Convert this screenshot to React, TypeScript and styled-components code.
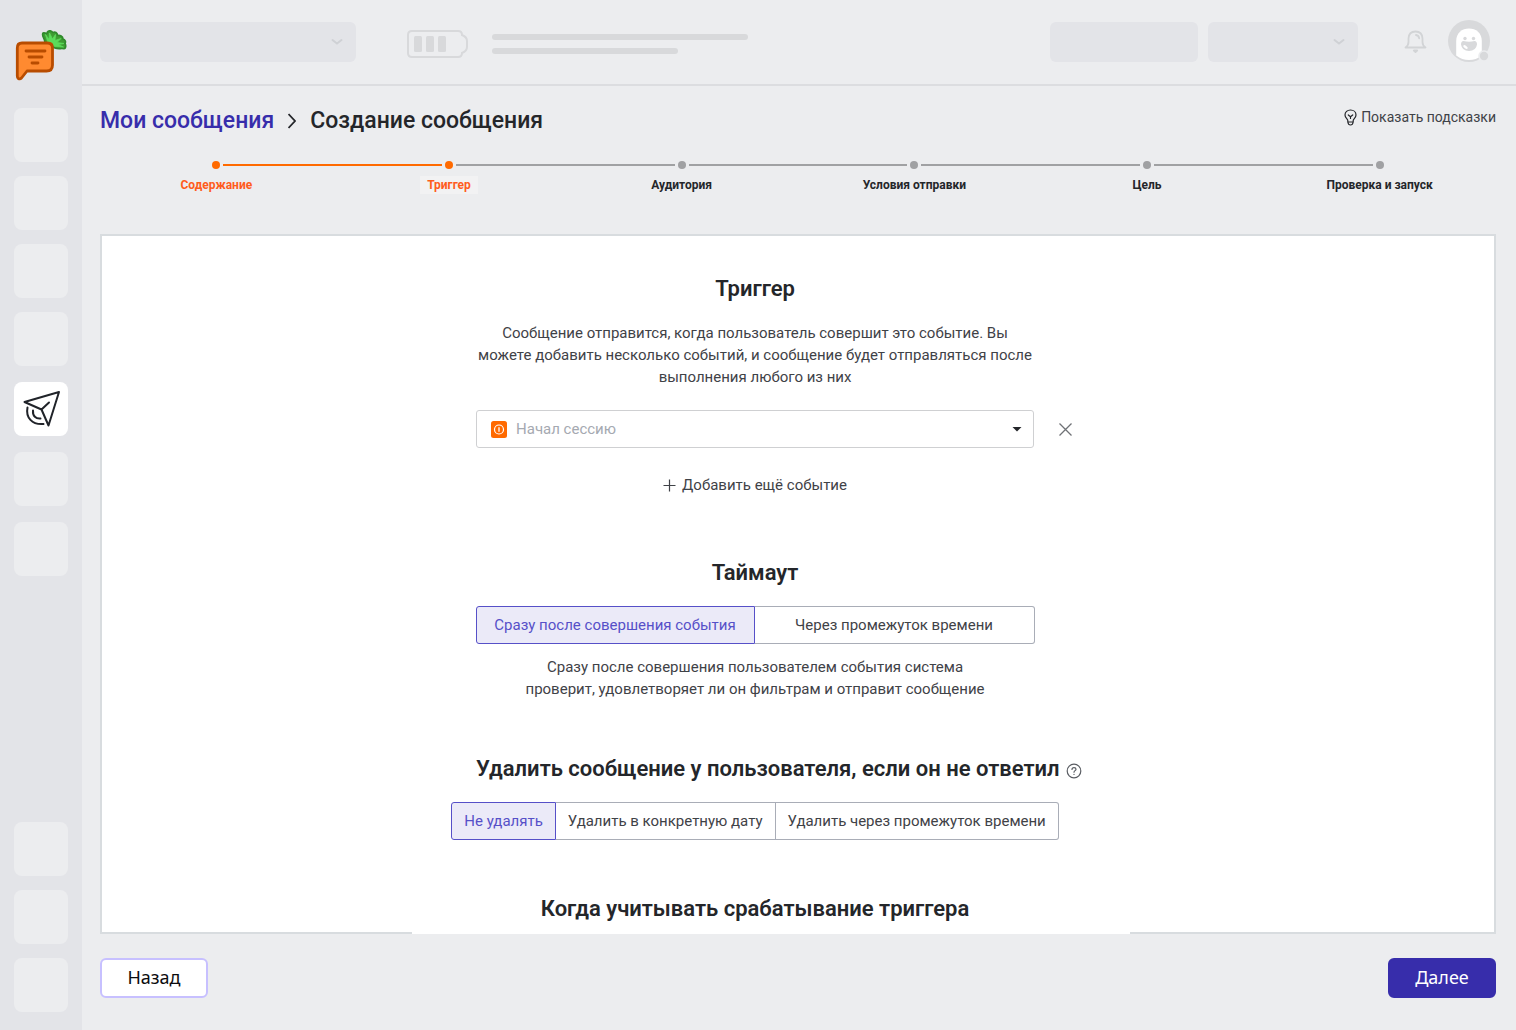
import React, { useState } from "react";
import styled, { createGlobalStyle, css } from "styled-components";

const color = {
  page: "#ecedef",
  rail: "#e3e4e8",
  line: "#dcdde0",
  ghost: "#d8d9db",
  panelBorder: "#d8dcdf",
  ink: "#24262a",
  text: "#3f4247",
  muted: "#a5a9b1",
  accent: "#372dab",
  selected: "#5650c8",
  orange: "#ff6a00",
  orangeText: "#ff5c1c",
  step: "#a0a1a3",
};

const uiFont = `Roboto, "Noto Sans", sans-serif`;

const GlobalStyle = createGlobalStyle`
  *, *::before, *::after { box-sizing: border-box; }
  body { margin: 0; background: ${color.page}; font-family: ${uiFont}; color: ${color.ink}; }
  button, select, input { font: inherit; color: inherit; }
  button { cursor: pointer; }
`;

const Page = styled.div`
  display: flex;
  min-height: 100vh;
`;

const Rail = styled.nav`
  flex: none;
  width: 82px;
  display: flex;
  flex-direction: column;
  justify-content: space-between;
  gap: 32px;
  padding: 30px 14px 18px;
  background: ${color.rail};
`;

const RailGroup = styled.div<{ $gap?: number }>`
  display: flex;
  flex-direction: column;
  gap: ${(p) => p.$gap ?? 14}px;
`;

const LogoLink = styled.a`
  display: flex;
  justify-content: center;
  margin-bottom: 12px;
`;

const Tile = styled.button<{ $active?: boolean }>`
  display: flex;
  align-items: center;
  justify-content: center;
  width: 54px;
  height: 54px;
  padding: 0;
  border: 0;
  border-radius: 8px;
  background: ${(p) => (p.$active ? "#fff" : color.page)};
`;

const Body = styled.div`
  flex: 1;
  min-width: 0;
  display: flex;
  flex-direction: column;
`;

const Header = styled.header`
  display: flex;
  align-items: center;
  height: 86px;
  padding: 0 26px 0 18px;
  border-bottom: 2px solid ${color.line};
`;

const GhostButton = styled.button<{ $width: number }>`
  display: flex;
  align-items: center;
  justify-content: flex-end;
  width: ${(p) => p.$width}px;
  height: 40px;
  padding: 0 13px;
  border: 0;
  border-radius: 6px;
  background: ${color.rail};
`;

const Usage = styled.div`
  display: flex;
  align-items: center;
  gap: 24px;
  flex: 1;
  padding: 4px 0 0 51px;
`;

const UsageLines = styled.div`
  display: flex;
  flex-direction: column;
  gap: 8px;
`;

const UsageLine = styled.div<{ $width: number }>`
  width: ${(p) => p.$width}px;
  height: 6px;
  border-radius: 3px;
  background: ${color.ghost};
`;

const HeaderActions = styled.div`
  display: flex;
  align-items: center;
  gap: 10px;
`;

const IconButton = styled.button`
  display: flex;
  padding: 0;
  border: 0;
  background: none;
`;

const Profile = styled.div`
  display: flex;
  align-items: center;
  gap: 21px;
  margin-left: 36px;
  padding-bottom: 2px;
`;

const Main = styled.main`
  flex: 1;
  display: flex;
  flex-direction: column;
  padding: 16px 20px 32px 18px;
`;

const TitleBar = styled.div`
  display: flex;
  align-items: flex-start;
  justify-content: space-between;
`;

const Crumbs = styled.nav`
  display: flex;
  align-items: center;
  gap: 14px;
  font-size: 23px;
  line-height: 37px;
  font-weight: 500;

  a { color: ${color.accent}; text-decoration: none; }
  h1 { margin: 0; font: inherit; }
`;

const Hints = styled.button`
  display: flex;
  align-items: center;
  gap: 4px;
  padding: 4px 0;
  border: 0;
  background: none;
  color: ${color.text};
  font-size: 14px;
  line-height: 22px;
`;

const Steps = styled.ol`
  display: grid;
  grid-template-columns: repeat(6, 1fr);
  margin: 18px 0 40px;
  padding: 0;
  list-style: none;
`;

const Step = styled.li`
  display: flex;
  flex-direction: column;
  align-items: center;
  gap: 3px;
`;

const Track = styled.div`
  align-self: stretch;
  display: grid;
  grid-template-columns: 1fr 14px 1fr;
  align-items: center;
  height: 16px;
`;

const Segment = styled.span<{ $tone?: string }>`
  height: 2px;
  background: ${(p) => p.$tone ?? "transparent"};
`;

const Dot = styled.span<{ $tone: string }>`
  justify-self: center;
  width: 8px;
  height: 8px;
  border-radius: 50%;
  background: ${(p) => p.$tone};
`;

const StepLabel = styled.span<{ $state: "done" | "active" | "next" }>`
  padding: 1px 7px;
  font-size: 12px;
  line-height: 16px;
  font-weight: 700;
  color: ${(p) => (p.$state === "next" ? color.ink : color.orangeText)};
  background: ${(p) => (p.$state === "active" ? "#f2f2f3" : "transparent")};
`;

const Panel = styled.section`
  flex: 1;
  display: grid;
  grid-template-columns: 23fr 718px 27fr;
  background: #fff;
  border: 2px solid ${color.panelBorder};
`;

const Form = styled.form`
  grid-column: 2;
  display: flex;
  flex-direction: column;
  align-items: center;
  gap: 55px;
  margin-bottom: -2px;
  padding: 39px 32px 11px 0;
  background: #fff;
`;

const Block = styled.section`
  display: flex;
  flex-direction: column;
  align-items: center;
  width: 558px;
`;

const Heading = styled.h2`
  margin: 0 0 19px;
  font-size: 22px;
  line-height: 28px;
  font-weight: 600;
  white-space: nowrap;

  &:last-child { margin-bottom: 0; }
`;

const HeadingWithHelp = styled(Heading)`
  display: flex;
  align-items: center;
  gap: 6px;
  align-self: flex-start;
`;

const Help = styled.button`
  display: flex;
  padding: 4px 0 0;
  border: 0;
  background: none;
`;

const Note = styled.p`
  margin: 0;
  font-size: 15px;
  line-height: 22px;
  color: ${color.text};
  text-align: center;
  white-space: nowrap;
`;

const EventRow = styled.div`
  position: relative;
  width: 558px;
  margin: 22px 0 26px;
`;

const EventSelect = styled.select`
  display: block;
  width: 100%;
  height: 38px;
  padding: 0 39px;
  appearance: none;
  border: 1px solid #cfd0d2;
  border-radius: 3px;
  background: #fff;
  color: ${color.muted};
  font-size: 15px;
`;

const Adornment = styled.span<{ $side: "left" | "right" }>`
  position: absolute;
  top: 0;
  bottom: 0;
  ${(p) => (p.$side === "left" ? "left: 15px;" : "right: 12px;")}
  display: flex;
  align-items: center;
  pointer-events: none;
`;

const RemoveButton = styled.button`
  position: absolute;
  left: calc(100% + 24px);
  top: 12px;
  display: flex;
  padding: 0;
  border: 0;
  background: none;
`;

const AddButton = styled.button`
  display: flex;
  align-items: center;
  gap: 6px;
  margin-bottom: 8px;
  padding: 0;
  border: 0;
  background: none;
  color: ${color.text};
  font-size: 15px;
  line-height: 22px;
`;

const Segmented = styled.fieldset<{ $even?: boolean }>`
  display: ${(p) => (p.$even ? "grid" : "flex")};
  grid-template-columns: 279px 280px;
  min-width: 0;
  margin: 0;
  padding: 0;
  border: 0;
  & + p { margin-top: 12px; }
`;

const Option = styled.label<{ $on: boolean }>`
  position: relative;
  display: flex;
  align-items: center;
  justify-content: center;
  height: 38px;
  padding: 0 12px;
  border: 1px solid #a9adb7;
  border-left-width: 0;
  background: #fff;
  color: ${color.text};
  font-size: 15px;
  white-space: nowrap;
  cursor: pointer;

  &:first-of-type { border-left-width: 1px; border-radius: 3px 0 0 3px; }
  &:last-of-type { border-radius: 0 3px 3px 0; }

  ${(p) =>
    p.$on &&
    css`
      border-color: ${color.selected};
      background: #ebeaf8;
      color: ${color.selected};
    `}

  input {
    position: absolute;
    inset: 0;
    margin: 0;
    opacity: 0;
    cursor: pointer;
  }
`;

const Footer = styled.footer`
  display: flex;
  justify-content: space-between;
  margin-top: 24px;
`;

const NavButton = styled.button<{ $primary?: boolean }>`
  width: 108px;
  height: 40px;
  padding: 0 0 2px;
  border: 2px solid ${(p) => (p.$primary ? color.accent : "#c7c0ff")};
  border-radius: 6px;
  background: ${(p) => (p.$primary ? color.accent : "#fff")};
  color: ${(p) => (p.$primary ? "#fff" : "#0c0c0e")};
  font-family: "Noto Sans", sans-serif;
  font-size: 18px;
`;

const Logo = () => (
  <svg width="52" height="52" viewBox="0 0 52 52" fill="none" aria-hidden="true">
    <path
      d="M29.700 12.500C30.500 9 26 6 28 3C30 2.500 31 3.500 32 3.500C32 1.500 34 0.300 36 1C37.500 1.300 37 2.500 38 2.500C40 1.500 42.500 2.500 42.500 5.500C45 5 48 6 48 9C50.500 10 51 12 50 13.500C51.500 16 50.500 18.500 49 18.800C46 18 44 19.500 40 18L36 16Z"
      fill="#3f9c33" stroke="#2f8a2b" strokeWidth="1.600" strokeLinejoin="round"
    />
    <path
      d="M30.500 4.500L34 9.500L34.500 3L37.500 9L40.500 4.500L40 10.500L46 8.500L42 12.500L49 13.500L43 14.500L48.500 17L40 16.500L33 13Z"
      fill="#5bdc5a" stroke="#5bdc5a" strokeWidth="0.800" strokeLinejoin="round"
    />
    <path
      d="M7 13H32.500Q37.500 13 37.500 18V35Q37.500 41 31.500 41H12L6.500 48Q5 49.500 3.300 48.500Q2.300 47.800 2.300 46V18Q2.300 13 7 13Z"
      fill="#ff8a30" stroke="#b84c00" strokeWidth="2.800" strokeLinejoin="round"
    />
    <path d="M11 21H30M14 27H27M17 33H23" stroke="#b84c00" strokeWidth="2.800" strokeLinecap="round" />
  </svg>
);

const SendIcon = () => (
  <svg width="40" height="40" viewBox="0 0 40 40" fill="none" stroke="#202329" strokeWidth="2" strokeLinejoin="round" strokeLinecap="round" aria-hidden="true">
    <path d="M3.500 13L38 3L27.500 36.500L20.500 20.500ZM20.500 20.500L28 13.500" />
    <path d="M6.500 18.500C4.500 28.500 11 36 22.500 35M12 21.500C11.500 27 15 30 19.500 29.500" />
  </svg>
);

const Chevron = () => (
  <svg width="12" height="8" viewBox="0 0 12 8" fill="none" stroke="#cfd1d5" strokeWidth="2" strokeLinecap="round" aria-hidden="true">
    <path d="M1.500 2L6 5.500L10.500 2" />
  </svg>
);

const Battery = () => (
  <svg width="61" height="28" viewBox="0 0 61 28" fill="none" aria-hidden="true">
    <path
      d="M5 1H51Q55 1 55 5Q60 7 60 11V17Q60 21 55 23Q55 27 51 27H5Q1 27 1 23V5Q1 1 5 1Z"
      stroke={color.ghost} strokeWidth="2"
    />
    <g fill={color.ghost}>
      <rect x="7" y="6" width="8" height="16" rx="1.500" />
      <rect x="19" y="6" width="8" height="16" rx="1.500" />
      <rect x="31" y="6" width="8" height="16" rx="1.500" />
    </g>
  </svg>
);

const Bell = () => (
  <svg width="23" height="24" viewBox="0 0 23 24" fill="none" stroke="#d2d4d6" strokeWidth="1.800" strokeLinecap="round" strokeLinejoin="round" aria-hidden="true">
    <path d="M1.500 18.500Q4.500 16.500 4.500 13V9.500Q4.800 2.500 11.500 2.500Q18.200 2.500 18.500 9.500V13Q18.500 16.500 21.500 18.500Z" />
    <path d="M12 6Q14.800 6.300 15.200 9.300" />
    <path d="M9.800 21.500H13.200L11.500 23Z" fill="#d2d4d6" />
  </svg>
);

const Avatar = () => (
  <svg width="42" height="42" viewBox="0 0 42 42" aria-hidden="true">
    <circle cx="21" cy="21" r="21" fill={color.ghost} />
    <path d="M8.200 21C8.200 13 14 8.500 21 8.500S33.800 13 33.800 21V35.500Q28 40 21 40T8.200 35.500Z" fill="#fff" />
    <circle cx="17" cy="18.500" r="1.700" fill={color.ghost} />
    <circle cx="25.500" cy="18.500" r="1.700" fill={color.ghost} />
    <path d="M15.500 21Q21 22.300 26.500 21Q29 21 29 24.500Q28 31 21 31Q14 31 13 24.500Q13 21 15.500 21Z" fill={color.ghost} />
    <ellipse cx="17.500" cy="27" rx="2.600" ry="1.300" transform="rotate(35 17.500 27)" fill="#fff" />
    <circle cx="36" cy="36" r="5.800" fill={color.page} />
    <circle cx="36" cy="36" r="4.200" fill={color.ghost} />
  </svg>
);

const CrumbArrow = () => (
  <svg width="8" height="16" viewBox="0 0 8 16" fill="none" stroke={color.ink} strokeWidth="1.800" aria-hidden="true">
    <path d="M0.500 1L7 8L0.500 15" />
  </svg>
);

const Bulb = () => (
  <svg width="13" height="17" viewBox="0 0 13 17" fill="none" stroke={color.ink} strokeWidth="1.200" strokeLinecap="round" strokeLinejoin="round" aria-hidden="true">
    <path d="M3.800 13V11.500C3.800 9.800 1 9 1 5.900C1 3 3.300 1 6.500 1S12 3 12 5.900C12 9 9.200 9.800 9.200 11.500V13ZM3.800 13Q4.300 16 6.500 16Q8.700 16 9.200 13" />
    <path d="M4.300 6L6.500 7.800L8.700 6M6.500 7.800V9.500" />
  </svg>
);

const SessionIcon = () => (
  <svg width="16" height="17" viewBox="0 0 16 17" fill="none" aria-hidden="true">
    <rect width="16" height="17" rx="2.500" fill={color.orange} />
    <circle cx="8" cy="8.500" r="4.500" stroke="#fff" strokeWidth="1.200" />
    <path d="M8 6.200V10.800" stroke="#fff" strokeWidth="1.300" />
  </svg>
);

const Caret = () => (
  <svg width="10" height="6" viewBox="0 0 10 6" aria-hidden="true">
    <path d="M0.500 1H9.500L5 5.500Z" fill={color.ink} />
  </svg>
);

const Cross = () => (
  <svg width="15" height="15" viewBox="0 0 15 15" stroke="#6f7276" strokeWidth="1.300" aria-hidden="true">
    <path d="M1.500 1.500L13.500 13.500M13.500 1.500L1.500 13.500" />
  </svg>
);

const Plus = () => (
  <svg width="13" height="13" viewBox="0 0 13 13" stroke={color.text} strokeWidth="1.200" aria-hidden="true">
    <path d="M6.500 0.500V12.500M0.500 6.500H12.500" />
  </svg>
);

const Question = () => (
  <svg width="16" height="16" viewBox="0 0 16 16" fill="none" stroke="#5a5d63" strokeWidth="1.200" strokeLinecap="round" aria-hidden="true">
    <circle cx="8" cy="8" r="6.800" />
    <path d="M6 6.500Q6 4.600 8 4.600T10 6.300C10 7.600 8 7.700 8 9.200M8 11.300V11.500" />
  </svg>
);

const stepNames = ["Содержание", "Триггер", "Аудитория", "Условия отправки", "Цель", "Проверка и запуск"];
const activeStep = 1;

function StepItem({ index }: { index: number }) {
  const state = index < activeStep ? "done" : index === activeStep ? "active" : "next";
  const tone = (edge: number) => (edge <= activeStep ? color.orange : color.step);
  return (
    <Step aria-current={state === "active" ? "step" : undefined}>
      <Track>
        <Segment $tone={index > 0 ? tone(index) : undefined} />
        <Dot $tone={tone(index)} />
        <Segment $tone={index < stepNames.length - 1 ? tone(index + 1) : undefined} />
      </Track>
      <StepLabel $state={state}>{stepNames[index]}</StepLabel>
    </Step>
  );
}

interface ChoiceProps {
  name: string;
  label: string;
  options: string[];
  even?: boolean;
}

function Choice({ name, label, options, even }: ChoiceProps) {
  const [value, setValue] = useState(0);
  return (
    <Segmented $even={even} aria-label={label}>
      {options.map((text, i) => (
        <Option key={text} $on={i === value}>
          <input type="radio" name={name} checked={i === value} onChange={() => setValue(i)} />
          {text}
        </Option>
      ))}
    </Segmented>
  );
}

export default function App() {
  return (
    <>
      <GlobalStyle />
      <Page>
        <Rail>
          <RailGroup>
            <LogoLink href="#" aria-label="Carrot">
              <Logo />
            </LogoLink>
            <RailGroup $gap={16}>
              <RailGroup>
                {[0, 1, 2, 3].map((i) => (
                  <Tile key={i} type="button" />
                ))}
              </RailGroup>
              <Tile type="button" $active aria-label="Сообщения">
                <SendIcon />
              </Tile>
              <Tile type="button" />
              <Tile type="button" />
            </RailGroup>
          </RailGroup>
          <RailGroup>
            <Tile type="button" />
            <Tile type="button" />
            <Tile type="button" />
          </RailGroup>
        </Rail>

        <Body>
          <Header>
            <GhostButton type="button" $width={256}>
              <Chevron />
            </GhostButton>
            <Usage>
              <Battery />
              <UsageLines>
                <UsageLine $width={256} />
                <UsageLine $width={186} />
              </UsageLines>
            </Usage>
            <HeaderActions>
              <GhostButton type="button" $width={148} />
              <GhostButton type="button" $width={150}>
                <Chevron />
              </GhostButton>
              <Profile>
                <IconButton type="button" aria-label="Уведомления">
                  <Bell />
                </IconButton>
                <IconButton type="button" aria-label="Профиль">
                  <Avatar />
                </IconButton>
              </Profile>
            </HeaderActions>
          </Header>

          <Main>
            <TitleBar>
              <Crumbs>
                <a href="#">Мои сообщения</a>
                <CrumbArrow />
                <h1>Создание сообщения</h1>
              </Crumbs>
              <Hints type="button">
                <Bulb />
                Показать подсказки
              </Hints>
            </TitleBar>

            <Steps>
              {stepNames.map((name, i) => (
                <StepItem key={name} index={i} />
              ))}
            </Steps>

            <Panel>
              <Form onSubmit={(e) => e.preventDefault()}>
                <Block>
                  <Heading>Триггер</Heading>
                  <Note>
                    Сообщение отправится, когда пользователь совершит это событие. Вы
                    <br />
                    можете добавить несколько событий, и сообщение будет отправляться после
                    <br />
                    выполнения любого из них
                  </Note>
                  <EventRow>
                    <EventSelect aria-label="Событие">
                      <option>Начал сессию</option>
                    </EventSelect>
                    <Adornment $side="left">
                      <SessionIcon />
                    </Adornment>
                    <Adornment $side="right">
                      <Caret />
                    </Adornment>
                    <RemoveButton type="button" aria-label="Удалить событие">
                      <Cross />
                    </RemoveButton>
                  </EventRow>
                  <AddButton type="button">
                    <Plus />
                    Добавить ещё событие
                  </AddButton>
                </Block>

                <Block>
                  <Heading>Таймаут</Heading>
                  <Choice
                    name="timeout"
                    label="Таймаут"
                    even
                    options={["Сразу после совершения события", "Через промежуток времени"]}
                  />
                  <Note>
                    Сразу после совершения пользователем события система
                    <br />
                    проверит, удовлетворяет ли он фильтрам и отправит сообщение
                  </Note>
                </Block>

                <Block>
                  <HeadingWithHelp>
                    Удалить сообщение у пользователя, если он не ответил
                    <Help type="button" aria-label="Подсказка">
                      <Question />
                    </Help>
                  </HeadingWithHelp>
                  <Choice
                    name="removal"
                    label="Удалить сообщение"
                    options={["Не удалять", "Удалить в конкретную дату", "Удалить через промежуток времени"]}
                  />
                </Block>

                <Block>
                  <Heading>Когда учитывать срабатывание триггера</Heading>
                </Block>
              </Form>
            </Panel>

            <Footer>
              <NavButton type="button">Назад</NavButton>
              <NavButton type="button" $primary>
                Далее
              </NavButton>
            </Footer>
          </Main>
        </Body>
      </Page>
    </>
  );
}
